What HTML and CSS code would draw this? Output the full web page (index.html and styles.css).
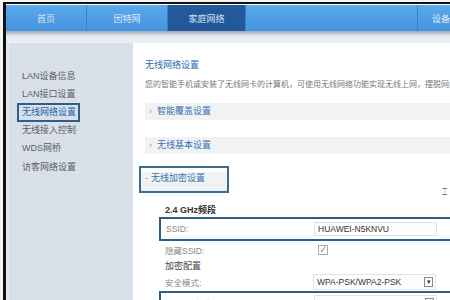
FILE: index.html
```html
<!DOCTYPE html>
<html lang="zh">
<head>
    <meta charset="UTF-8">
    <title>家庭网络</title>
    <link rel="stylesheet" href="styles.css">
</head>
<body>
    <div class="frame">
        <div class="nav">
            <div class="tab">首页</div>
            <div class="tab">因特网</div>
            <div class="tab active">家庭网络</div>
            <div class="nav-space"></div>
            <div class="tab last">设备管理</div>
        </div>
        <div class="nav-shadow"></div>
        <div class="main">
            <div class="sidebar">
                <div class="side-item">LAN设备信息</div>
                <div class="side-item">LAN接口设置</div>
                <div class="side-item current">无线网络设置</div>
                <div class="side-item">无线接入控制</div>
                <div class="side-item">WDS网桥</div>
                <div class="side-item">访客网络设置</div>
            </div>
            <div class="content">
                <div class="title">无线网络设置</div>
                <div class="desc">您的智能手机或安装了无线网卡的计算机，可使用无线网络功能实现无线上网，摆脱网线的束缚。</div>
                <div class="section"><span class="arrow">›</span>智能覆盖设置</div>
                <div class="section"><span class="arrow">›</span>无线基本设置</div>
                <div class="section open"><span class="hl"><span class="arrow">-</span>无线加密设置</span></div>
                <div class="tools">⌶</div>
                <div class="form">
                    <div class="band">2.4 GHz频段</div>
                    <div class="row boxed">
                        <span class="label">SSID:</span>
                        <span class="input">HUAWEI-N5KNVU</span>
                    </div>
                    <div class="row">
                        <span class="label">隐藏SSID:</span>
                        <span class="check">✓</span>
                    </div>
                    <div class="sub">加密配置</div>
                    <div class="row">
                        <span class="label">安全模式:</span>
                        <span class="input select">WPA-PSK/WPA2-PSK<span class="drop">▾</span></span>
                    </div>
                    <div class="row boxed">
                        <span class="label">WPA加密模式:</span>
                        <span class="input select">AES<span class="drop">▾</span></span>
                    </div>
                </div>
            </div>
        </div>
    </div>
</body>
</html>
```

FILE: styles.css
```css
body {
    margin: 0;
    padding: 2px 0 0 3px;
    background: #f4f4f4;
    font-family: "Liberation Sans", "Noto Sans CJK SC", sans-serif;
    height: 298px;
    overflow: hidden;
}
.frame {
    border-top: 2px solid #111;
    border-left: 3px solid #111;
    background: #fff;
    height: 296px;
    overflow: hidden;
}
.nav {
    display: flex;
    height: 26px;
    margin-top: 1px;
    background: linear-gradient(#5aaaec, #4593de);
    overflow: hidden;
}
.tab {
    width: 80px;
    flex-shrink: 0;
    display: flex;
    align-items: center;
    justify-content: center;
    color: #dfeaf7;
    font-size: 9px;
    border-right: 1px solid #3b7fc4;
    white-space: nowrap;
}
.tab.active {
    width: 77px;
    background: #23599a;
    color: #d3e0f0;
}
.nav-space {
    flex: 1;
    border-right: 1px solid #3b7fc4;
}
.tab.last {
    width: 18px;
    justify-content: flex-start;
    padding-left: 14px;
    border-right: none;
    overflow: hidden;
}
.nav-shadow {
    height: 12px;
    background: linear-gradient(#9aa7b2, #e6e9ed 40%, #eef0f3);
}
.main {
    display: flex;
    height: 260px;
}
.sidebar {
    width: 127px;
    flex-shrink: 0;
    background: #d9e0ea;
    border-left: 3px solid #e4e9f0;
    padding-top: 24px;
    box-sizing: border-box;
    margin-right: 2px;
}
.side-item {
    font-size: 9px;
    color: #5a5f66;
    height: 18.4px;
    line-height: 18px;
    padding-left: 13px;
    white-space: nowrap;
}
.side-item.current {
    color: #2b64a8;
    margin-left: 8px;
    padding: 0 2px 0 3px;
    width: fit-content;
    height: 15px;
    line-height: 15px;
    border: 2px solid #2c5f8e;
    margin-bottom: -1px;
    margin-top: -1px;
}
.content {
    flex: 1;
    padding: 15px 0 0 10px;
    white-space: nowrap;
    overflow: hidden;
}
.title {
    color: #2b6cb8;
    font-size: 9px;
    height: 14px;
}
.desc {
    color: #777;
    font-size: 8px;
    margin-top: 6px;
    height: 12px;
}
.section {
    background: #f1f2f3;
    height: 17px;
    line-height: 17px;
    font-size: 9px;
    color: #3a72b4;
    margin-top: 13px;
}
.arrow {
    color: #999;
    padding: 0 5px 0 4px;
    font-size: 9px;
}
.section + .section {
    margin-top: 17px;
}
.section.open {
    margin-top: 12px;
    background: transparent;
    height: 27px;
    line-height: 21px;
}
.hl {
    display: inline-block;
    margin-left: -6px;
    width: 86px;
    height: 21px;
    border: 2px solid #3a6c8e;
    background: linear-gradient(#fff 4px, #f1f2f3 4px);
    padding-top: 2px;
    box-sizing: content-box;
    line-height: 17px;
}
.hl .arrow {
    padding: 0 3px 0 4px;
}
.tools {
    text-align: right;
    font-size: 9px;
    color: #777;
    margin-top: -6px;
    height: 10px;
    padding-right: 3px;
}
.form {
    padding-left: 15px;
}
.band {
    font-size: 9px;
    font-weight: bold;
    color: #333;
    padding-left: 5px;
    margin-top: 6px;
    height: 14px;
}
.row {
    display: flex;
    align-items: center;
    height: 18px;
    font-size: 8.5px;
    color: #888;
}
.row.boxed {
    height: 20px;
    border: 2px solid #2e5f80;
    border-right: none;
    margin-left: -1px;
}
.label {
    width: 148px;
    padding-left: 5px;
    flex-shrink: 0;
}
.input {
    height: 14px;
    line-height: 14px;
    border: 1px solid #e2e2e2;
    background: #fdfdfd;
    color: #333;
    padding-left: 3px;
    box-sizing: border-box;
    display: flex;
    align-items: center;
    width: 123px;
}
.check {
    width: 8px;
    height: 8px;
    border: 1px solid #aaa;
    font-size: 7px;
    line-height: 8px;
    text-align: center;
    color: #555;
    margin-left: 5px;
}
.sub {
    font-size: 9px;
    color: #444;
    padding-left: 5px;
    height: 14px;
}
.select {
    justify-content: space-between;
    padding-right: 2px;
    height: 16px;
}
.drop {
    width: 7px;
    height: 8px;
    border: 1px solid #888;
    font-size: 7px;
    line-height: 8px;
    text-align: center;
    color: #333;
}
```
